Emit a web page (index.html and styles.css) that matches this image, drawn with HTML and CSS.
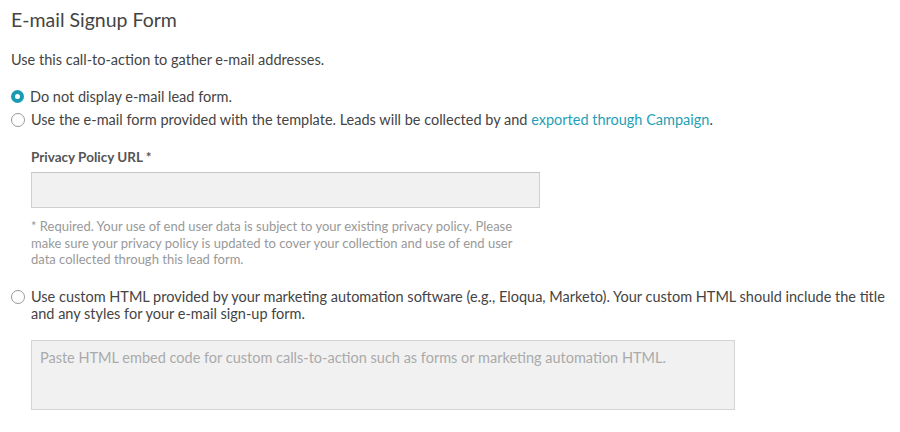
FILE: index.html
```html
<!DOCTYPE html>
<html>
<head>
<meta charset="utf-8">
<link rel="stylesheet" href="styles.css">
</head>
<body>
<div class="panel">
  <h1 class="title">E-mail Signup Form</h1>
  <p class="intro">Use this call-to-action to gather e-mail addresses.</p>
  <div class="options">
    <label class="option">
      <span class="radio checked"></span>
      <span class="option-text">Do not display e-mail lead form.</span>
    </label>
    <label class="option">
      <span class="radio"></span>
      <span class="option-text">Use the e-mail form provided with the template. Leads will be collected by and <a class="link" href="#">exported through Campaign</a>.</span>
    </label>
    <div class="sub">
      <div class="field-label">Privacy Policy URL *</div>
      <div class="input"></div>
      <p class="help">* Required. Your use of end user data is subject to your existing privacy policy. Please make sure your privacy policy is updated to cover your collection and use of end user data collected through this lead form.</p>
    </div>
    <label class="option option-wide">
      <span class="radio"></span>
      <span class="option-text">Use custom HTML provided by your marketing automation software (e.g., Eloqua, Marketo). Your custom HTML should include the title and any styles for your e-mail sign-up form.</span>
    </label>
    <div class="sub">
      <div class="textarea">Paste HTML embed code for custom calls-to-action such as forms or marketing automation HTML.</div>
    </div>
  </div>
</div>
</body>
</html>
```
FILE: styles.css
```css
html, body {
  margin: 0;
  padding: 0;
  background: #fff;
}
body {
  font-family: Lato, "Open Sans", sans-serif;
  color: #444;
}
.panel {
  padding: 8px 11px 0 11px;
}
.title {
  margin: 0;
  font-size: 19.5px;
  font-weight: 400;
  line-height: 24px;
  color: #444;
}
.intro {
  margin: 18px 0 0 0;
  font-size: 14.5px;
  line-height: 20px;
  color: #444;
}
.options {
  margin-top: 18px;
  display: flex;
  flex-direction: column;
}
.option {
  display: flex;
  align-items: flex-start;
  font-size: 14.5px;
  line-height: 17px;
  color: #444;
  margin-bottom: 6px;
}
.radio {
  flex: none;
  width: 12px;
  height: 12px;
  border: 1px solid #999;
  border-radius: 50%;
  margin: 2px 6px 0 0;
  box-sizing: content-box;
  background: #fff;
}
.radio.checked {
  width: 5px;
  height: 5px;
  border: 4px solid #1a9bb4;
  background: #fff;
}
.link {
  color: #1f9fb6;
  text-decoration: none;
}
.sub {
  padding-left: 20px;
}
.field-label {
  margin-top: 15px;
  font-size: 13.5px;
  font-weight: 700;
  line-height: 16px;
  color: #555;
}
.input {
  margin-top: 7px;
  width: 509px;
  height: 36px;
  box-sizing: border-box;
  border: 1px solid #cfcfcf;
  border-top-color: #c4c4c4;
  background: #f1f1f1;
}
.help {
  margin: 10px 0 0 0;
  width: 502px;
  font-size: 13px;
  line-height: 16.5px;
  color: #999;
}
.option-wide {
  margin-top: 20px;
}
.textarea {
  margin-top: 12px;
  width: 704px;
  height: 70px;
  box-sizing: border-box;
  border: 1px solid #d4d4d4;
  background: #f1f1f1;
  padding: 8px 8px;
  font-size: 14.5px;
  line-height: 17px;
  color: #aaa;
}
```
